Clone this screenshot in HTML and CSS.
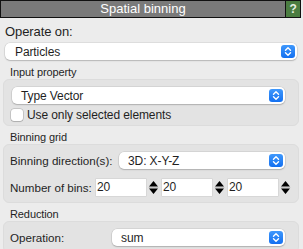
FILE: index.html
```html
<!DOCTYPE html>
<html lang="en">
<head>
    <meta charset="UTF-8">
    <title>Spatial binning</title>
    <link rel="stylesheet" href="styles.css">
</head>
<body>
    <div class="titlebar">
        <div class="title">Spatial binning</div>
        <div class="help">?</div>
    </div>

    <div class="top-label">Operate on:</div>
    <div class="combo combo-wide">
        <span>Particles</span>
        <span class="arrows"><svg width="14" height="13" viewBox="0 0 14 13"><path d="M4.5 5.2 L7 2.8 L9.5 5.2 M4.5 7.8 L7 10.2 L9.5 7.8" fill="none" stroke="#fff" stroke-width="1.4" stroke-linecap="round" stroke-linejoin="round"/></svg></span>
    </div>

    <div class="section first">Input property</div>
    <div class="group">
        <div class="combo">
            <span>Type Vector</span>
            <span class="arrows"><svg width="14" height="13" viewBox="0 0 14 13"><path d="M4.5 5.2 L7 2.8 L9.5 5.2 M4.5 7.8 L7 10.2 L9.5 7.8" fill="none" stroke="#fff" stroke-width="1.4" stroke-linecap="round" stroke-linejoin="round"/></svg></span>
        </div>
        <label class="check-row"><span class="checkbox"></span>Use only selected elements</label>
    </div>

    <div class="section">Binning grid</div>
    <div class="group grid-group">
        <div class="row">
            <span class="row-label dir-label">Binning direction(s):</span>
            <div class="combo row-combo">
                <span>3D: X-Y-Z</span>
                <span class="arrows"><svg width="14" height="13" viewBox="0 0 14 13"><path d="M4.5 5.2 L7 2.8 L9.5 5.2 M4.5 7.8 L7 10.2 L9.5 7.8" fill="none" stroke="#fff" stroke-width="1.4" stroke-linecap="round" stroke-linejoin="round"/></svg></span>
            </div>
        </div>
        <div class="row bins-row">
            <span class="row-label bins-label">Number of bins:</span>
            <div class="spins">
                <div class="spin"><span class="spin-value">20</span><svg class="stepper" width="11" height="17" viewBox="0 0 11 17"><path d="M1 7.5 L5.5 2 L10 7.5 Z M1 9.5 L5.5 15 L10 9.5 Z" fill="#000"/><path d="M0.5 8.5 H10.5" stroke="#c8c8c8" stroke-width="1"/></svg></div>
                <div class="spin"><span class="spin-value">20</span><svg class="stepper" width="11" height="17" viewBox="0 0 11 17"><path d="M1 7.5 L5.5 2 L10 7.5 Z M1 9.5 L5.5 15 L10 9.5 Z" fill="#000"/><path d="M0.5 8.5 H10.5" stroke="#c8c8c8" stroke-width="1"/></svg></div>
                <div class="spin"><span class="spin-value">20</span><svg class="stepper" width="11" height="17" viewBox="0 0 11 17"><path d="M1 7.5 L5.5 2 L10 7.5 Z M1 9.5 L5.5 15 L10 9.5 Z" fill="#000"/><path d="M0.5 8.5 H10.5" stroke="#c8c8c8" stroke-width="1"/></svg></div>
            </div>
        </div>
    </div>

    <div class="section">Reduction</div>
    <div class="group reduce-group">
        <div class="row">
            <span class="row-label op-label">Operation:</span>
            <div class="combo row-combo">
                <span>sum</span>
                <span class="arrows"><svg width="14" height="13" viewBox="0 0 14 13"><path d="M4.5 5.2 L7 2.8 L9.5 5.2 M4.5 7.8 L7 10.2 L9.5 7.8" fill="none" stroke="#fff" stroke-width="1.4" stroke-linecap="round" stroke-linejoin="round"/></svg></span>
            </div>
        </div>
    </div>
</body>
</html>
```

FILE: styles.css
```css
body { margin: 0; width: 303px; height: 249px; overflow: hidden; background: #ececec; font-family: "Liberation Sans", Arial, sans-serif; font-size: 12px; letter-spacing: -0.1px; color: #1f1f1f; }

.titlebar { display: flex; height: 18px; margin-right: 2px; }
.title { flex: 1; background: #7a7a7a; border: 1px solid #111; color: #fff; text-align: center; line-height: 16px; font-size: 13px; letter-spacing: 0; }
.help { width: 14px; background: #4b7d41; border: 1px solid #111; border-left: 0; color: #e6efe2; text-align: center; font-weight: bold; font-size: 12px; line-height: 16px; }

.top-label { margin: 6px 0 0 5px; line-height: 16px; font-size: 13px; }

.combo { display: flex; align-items: center; justify-content: space-between; height: 17px; padding-left: 9px; background: #fff; border-radius: 5px; box-shadow: 0 0 0 0.5px rgba(0,0,0,0.12), 0 1px 1.5px rgba(0,0,0,0.18); white-space: nowrap; }
.combo-wide { margin: 3px 6px 0 5px; padding-left: 10px; }
.arrows { display: flex; width: 14px; height: 13px; margin-right: 2px; border-radius: 3px; background: linear-gradient(#3f98fc, #1470f0); }

.section { font-size: 11px; line-height: 13px; margin: 5px 0 0 10px; white-space: nowrap; }
.section.first { margin-top: 6px; }

.group { margin: 0 4px 0 3px; padding: 7px 13px 3px 8px; background: #e3e3e3; border: 1px solid #dcdcdc; border-radius: 6px; }

.check-row { display: flex; align-items: center; height: 14px; margin-top: 4px; white-space: nowrap; }
.checkbox { flex: none; width: 12px; height: 12px; margin: 0 4px 0 -1px; background: #fff; border-radius: 3px; box-shadow: 0 0 0 0.5px rgba(0,0,0,0.25), 0 1px 1px rgba(0,0,0,0.12); }

.row { display: flex; align-items: center; height: 17px; }
.row-label { flex: none; margin-left: -2px; white-space: nowrap; font-size: 11.6px; letter-spacing: 0; }
.row-combo { flex: 1; }
.dir-label { width: 109px; }
.bins-label { width: 86px; }
.op-label { width: 102px; }

.grid-group { padding-bottom: 6px; }
.bins-row { margin: 10px -6px 0 0; }
.spins { flex: 1; display: flex; gap: 3px; }
.spin { flex: 1; display: flex; align-items: center; gap: 2px; }
.spin-value { flex: 1; height: 17px; line-height: 17px; padding-left: 1px; background: #fff; box-shadow: 0 0 0 0.5px rgba(0,0,0,0.1); }
.stepper { flex: none; }

.reduce-group { padding-bottom: 6px; }
```
